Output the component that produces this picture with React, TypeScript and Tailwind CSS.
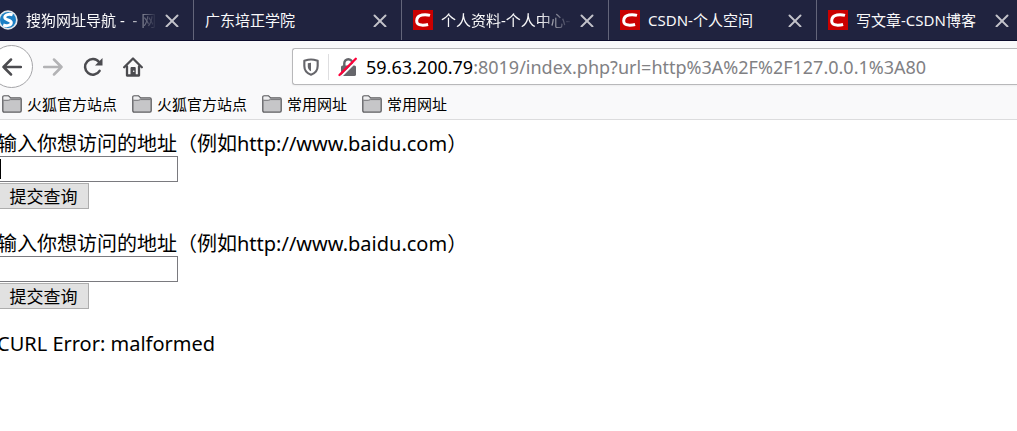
import React, { useState } from "react";
import clsx from "clsx";

type TabIcon = "sogou" | "csdn" | null;

const tabs: { title: string; icon: TabIcon; width: string; fade?: boolean }[] = [
  { title: "搜狗网址导航 -  - 网址", icon: "sogou", width: "w-[194px]", fade: true },
  { title: "广东培正学院", icon: null, width: "w-[208px]" },
  { title: "个人资料-个人中心-CSDN", icon: "csdn", width: "w-[207px]", fade: true },
  { title: "CSDN-个人空间", icon: "csdn", width: "w-[208px]" },
  { title: "写文章-CSDN博客", icon: "csdn", width: "w-[207px]" },
];

const bookmarks = ["火狐官方站点", "火狐官方站点", "常用网址", "常用网址"];

function SogouIcon() {
  return (
    <svg viewBox="0 0 20 20" className="size-5 shrink-0" aria-hidden="true">
      <circle cx="10" cy="10" r="9.7" fill="#e3e8ec" />
      <circle cx="10" cy="10" r="8" fill="#1c7fc4" />
      <path
        d="M14.600 4.800C11.500 3.600 6.600 4.600 6.800 7.500C7 10.500 13.200 9.500 13.300 12.600C13.400 15.600 8.500 16.300 5.200 15"
        fill="none"
        stroke="#fff"
        strokeWidth="3"
      />
    </svg>
  );
}

function CsdnIcon() {
  return (
    <svg viewBox="0 0 20 20" className="size-5 shrink-0" aria-hidden="true">
      <path fill="#ca0000" d="M0 0h20v20H0z" />
      <path
        d="M17 5.4C14.4 4.7 11.5 4.6 9 5C5.800 5.600 3.800 7.800 3.700 10.700C3.600 13.600 5.400 15 8.500 15.100C10.900 15.200 13.200 15 15.100 14.500"
        fill="none"
        stroke="#fff"
        strokeWidth="3"
      />
    </svg>
  );
}

function CloseIcon() {
  return (
    <svg viewBox="0 0 14 14" className="size-[14px]" fill="none" stroke="#c3c3ca" strokeWidth="1.900" strokeLinecap="round">
      <path d="M1.500 2.500l11 11M12.500 2.500l-11 11" />
    </svg>
  );
}

function ArrowIcon({ className }: { className?: string }) {
  return (
    <svg
      viewBox="0 0 20 20"
      className={clsx("size-5", className)}
      fill="none"
      stroke="currentColor"
      strokeWidth="2.500"
      strokeLinecap="round"
      strokeLinejoin="round"
    >
      <path d="M19 10H1.500M9 2.500L1.500 10L9 17.500" />
    </svg>
  );
}

function ReloadIcon() {
  return (
    <svg viewBox="0 0 20 20" className="size-5" fill="none" stroke="currentColor" strokeWidth="2.500" strokeLinecap="round">
      <path d="M16.600 13.800A7.800 7.800 0 1 1 16 5" />
      <path d="M19.500 1v7.500h-7.500z" fill="currentColor" stroke="none" />
    </svg>
  );
}

function HomeIcon() {
  return (
    <svg viewBox="0 0 20 20" className="size-5" fill="none" stroke="currentColor" strokeWidth="2.300" strokeLinecap="round" strokeLinejoin="round">
      <path d="M1.200 10.200L10 1.500L18.800 10.200" />
      <path d="M4 9.500V18.500H16V9.500" />
      <path d="M8 18v-7.500h4.200V18z" fill="currentColor" strokeWidth="1" />
      <circle cx="10.700" cy="14.300" r=".8" fill="#f9f9fa" stroke="none" />
    </svg>
  );
}

function ShieldIcon() {
  return (
    <svg viewBox="0 0 18 20" className="h-[18px] w-4 shrink-0" aria-hidden="true">
      <path
        d="M9 1.500C11.500 1.500 14 2.200 16.500 3V9C16.500 14 13.500 17.200 9 18.700C4.500 17.200 1.500 14 1.500 9V3C4 2.200 6.500 1.500 9 1.500Z"
        fill="none"
        stroke="#66666b"
        strokeWidth="2.400"
        strokeLinejoin="round"
      />
      <path d="M9 5.200C7.700 5.200 6.500 5.400 5.400 5.800V9.200C5.400 12 6.700 13.800 9 14.800Z" fill="#66666b" />
    </svg>
  );
}

function InsecureIcon() {
  return (
    <svg viewBox="0 0 20 20" className="size-5 shrink-0" aria-hidden="true">
      <path d="M6.300 9V6.200a4 4 0 0 1 8 0V9" fill="none" stroke="#66666b" strokeWidth="2.400" />
      <rect x="3" y="8.500" width="15" height="10.500" rx="1.600" fill="#66666b" />
      <path d="M2.800 19.800L20 2.600" stroke="#f9f9fa" strokeWidth="2" />
      <path d="M1.500 18L17.800 1.700" stroke="#ff0039" strokeWidth="2.300" strokeLinecap="round" />
    </svg>
  );
}

function FolderIcon() {
  return (
    <svg viewBox="0 0 20 18" className="h-[18px] w-5 shrink-0" aria-hidden="true">
      <path
        d="M.8 15.800V2.200Q.8.900 2.100.900H6.500L8.600 2.900H17.900Q19.200 2.900 19.200 4.200V15.800Q19.200 17.100 17.900 17.100H2.100Q.8 17.100.8 15.800Z"
        fill="#c6c6c8"
        stroke="#5d5d60"
        strokeWidth="1.300"
      />
      <path d="M1.500 5.300H6.500L8.600 4.600H18.500" fill="none" stroke="#77777a" strokeWidth="1" />
      <path d="M1.500 4.600V1.600H6.200L8 3.200L6.300 4.600Z" fill="#eeeeef" />
    </svg>
  );
}

function QueryForm({ id, caret }: { id: string; caret?: boolean }) {
  const [address, setAddress] = useState("");
  return (
    <form className="mb-[21px] flex flex-col items-start" onSubmit={(e) => e.preventDefault()}>
      <label htmlFor={id} className="h-[26px] whitespace-nowrap leading-7">
        输入你想访问的地址（例如http://www.baidu.com）
      </label>
      <div className="relative mb-px">
        <input
          id={id}
          type="text"
          value={address}
          onChange={(e) => setAddress(e.target.value)}
          className="block h-[26px] w-[181px] border border-[#7a7a7f] bg-white px-1 text-base outline-none"
        />
        {caret && <span className="absolute left-[3px] top-[3px] h-5 w-px bg-black" />}
      </div>
      <button type="submit" className="h-[26px] w-[92px] border border-[#adadad] bg-[#e1e1e1] pl-px pt-px text-[17px] leading-6">
        提交查询
      </button>
    </form>
  );
}

export default function App() {
  return (
    <div className="min-h-screen overflow-hidden bg-white font-['Noto_Sans','Noto_Sans_CJK_SC',sans-serif] text-black">
      <nav aria-label="标签页" className="flex h-[41px] overflow-hidden border-b border-[#0c0c2c] bg-[#20233f]">
        {tabs.map((tab, i) => (
          <div
            key={i}
            className={clsx(
              "flex shrink-0 items-center border-r border-[#63657a] pr-[14px]",
              tab.width,
              i > 0 && "pl-[11px]",
            )}
          >
            {tab.icon === "sogou" && <span className="-ml-0.5 mr-2"><SogouIcon /></span>}
            {tab.icon === "csdn" && <span className="mr-2"><CsdnIcon /></span>}
            <a
              href="#"
              className={clsx(
                "min-w-0 flex-1 overflow-hidden whitespace-pre text-[15px] leading-6 text-[#f9f9fa]",
                tab.fade && "mask-r-from-75% mask-r-to-100%",
              )}
            >
              {tab.title}
            </a>
            <button type="button" aria-label="关闭标签页" className="ml-2">
              <CloseIcon />
            </button>
          </div>
        ))}
      </nav>

      <header className="border-b border-[#dcdcdd] bg-[#f9f9fa]">
        <div className="flex h-[51px] items-center text-[#4c4c50]">
          <button
            type="button"
            aria-label="后退"
            className="-ml-[10px] flex size-[43px] shrink-0 items-center justify-center rounded-full border border-[#a5a5a8] bg-white"
          >
            <ArrowIcon />
          </button>
          <button type="button" aria-label="前进" className="ml-[10px] text-[#b3b3b5]">
            <ArrowIcon className="rotate-180" />
          </button>
          <button type="button" aria-label="刷新" className="ml-5">
            <ReloadIcon />
          </button>
          <button type="button" aria-label="主页" className="ml-5">
            <HomeIcon />
          </button>
          <div className="ml-[149px] flex h-[37px] min-w-0 flex-1 items-center rounded-l-[3px] border border-r-0 border-[#b8b8ba] bg-white pl-[10px] shadow-xs">
            <ShieldIcon />
            <span className="mx-[9px] h-[26px] w-px shrink-0 bg-[#dedee0]" />
            <InsecureIcon />
            <a href="#" className="ml-2 whitespace-nowrap text-[18px] leading-6 text-[#818184]">
              <span className="text-black">59.63.200.79</span>
              :8019/index.php?url=http%3A%2F%2F127.0.0.1%3A80
            </a>
          </div>
        </div>
        <nav aria-label="书签" className="flex h-[27px] items-start gap-[15px] pl-0.5">
          {bookmarks.map((name, i) => (
            <a key={i} href="#" className="flex h-6 items-center gap-[5px] whitespace-nowrap text-[15px] leading-6">
              <FolderIcon />
              {name}
            </a>
          ))}
        </nav>
      </header>

      <main className="-ml-[3px] pt-[10px] text-[20px]">
        <QueryForm id="address-1" caret />
        <QueryForm id="address-2" />
        <p className="leading-7">CURL Error: malformed</p>
      </main>
    </div>
  );
}
